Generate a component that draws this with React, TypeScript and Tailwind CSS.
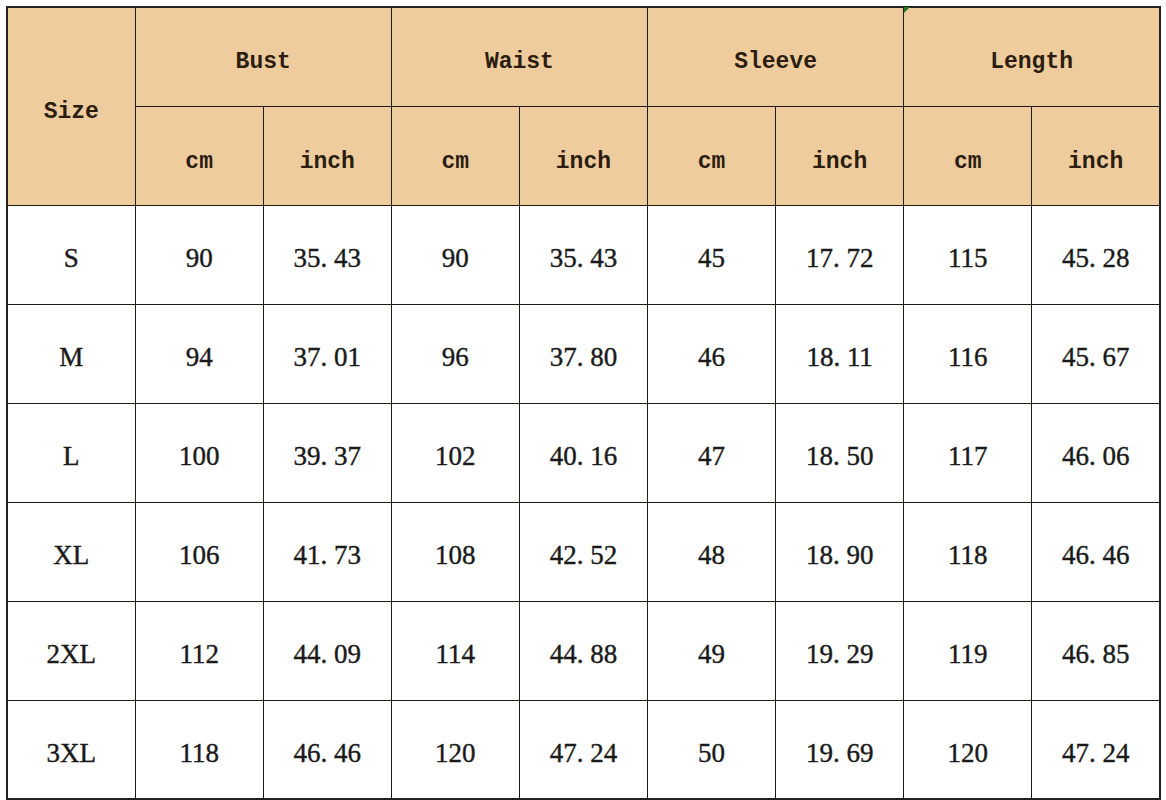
const HEADER_BG = 'bg-[#efcc9d]'

const GROUPS = ['Bust', 'Waist', 'Sleeve', 'Length']

// size, bust cm/in, waist cm/in, sleeve cm/in, length cm/in
const ROWS: string[][] = [
  ['S', '90', '35. 43', '90', '35. 43', '45', '17. 72', '115', '45. 28'],
  ['M', '94', '37. 01', '96', '37. 80', '46', '18. 11', '116', '45. 67'],
  ['L', '100', '39. 37', '102', '40. 16', '47', '18. 50', '117', '46. 06'],
  ['XL', '106', '41. 73', '108', '42. 52', '48', '18. 90', '118', '46. 46'],
  ['2XL', '112', '44. 09', '114', '44. 88', '49', '19. 29', '119', '46. 85'],
  ['3XL', '118', '46. 46', '120', '47. 24', '50', '19. 69', '120', '47. 24'],
]

const headCell =
  'border-[1.5px] border-[#1e1a17] text-center align-middle font-bold text-[23px] text-[#2b1d10] [font-family:"Liberation_Mono",monospace]'
const bodyCell =
  'border-[1.5px] border-[#1e1a17] text-center align-middle pt-[8px] text-[27px] text-[#1a1a1a] [-webkit-text-stroke:0.4px_#1a1a1a] [font-family:"Liberation_Serif",serif]'

export default function App() {
  return (
    <div className="w-[1166px] h-[800px] bg-white pt-[6px] pl-[6px]">
      <div className="relative w-[1155px]">
        <table className="w-[1155px] h-[793px] table-fixed border-collapse border-[2.5px] border-[#222]">
          <colgroup>
            {Array.from({ length: 9 }).map((_, i) => (
              <col key={i} className="w-[128px]" />
            ))}
          </colgroup>
          <thead>
            <tr className={`h-[99px] ${HEADER_BG}`}>
              <th rowSpan={2} className={`${headCell} pt-[12px]`}>
                Size
              </th>
              {GROUPS.map((g) => (
                <th key={g} colSpan={2} className={`${headCell} pt-[10px]`}>
                  {g}
                </th>
              ))}
            </tr>
            <tr className={`h-[99px] ${HEADER_BG}`}>
              {GROUPS.map((g) => (
                <>
                  <th key={g + 'cm'} className={`${headCell} pt-[13px]`}>
                    cm
                  </th>
                  <th key={g + 'in'} className={`${headCell} pt-[13px]`}>
                    inch
                  </th>
                </>
              ))}
            </tr>
          </thead>
          <tbody>
            {ROWS.map((row) => (
              <tr key={row[0]} className="h-[99px] bg-white">
                {row.map((v, i) => (
                  <td key={i} className={bodyCell}>
                    {v}
                  </td>
                ))}
              </tr>
            ))}
          </tbody>
        </table>
        {/* liten grön kommentarsmarkör i Length-cellen */}
        <svg className="absolute left-[898px] top-[1px] w-[6px] h-[6px]" viewBox="0 0 6 6">
          <polygon points="0,0 6,0 0,6" fill="#1f7a1f" />
        </svg>
      </div>
    </div>
  )
}
